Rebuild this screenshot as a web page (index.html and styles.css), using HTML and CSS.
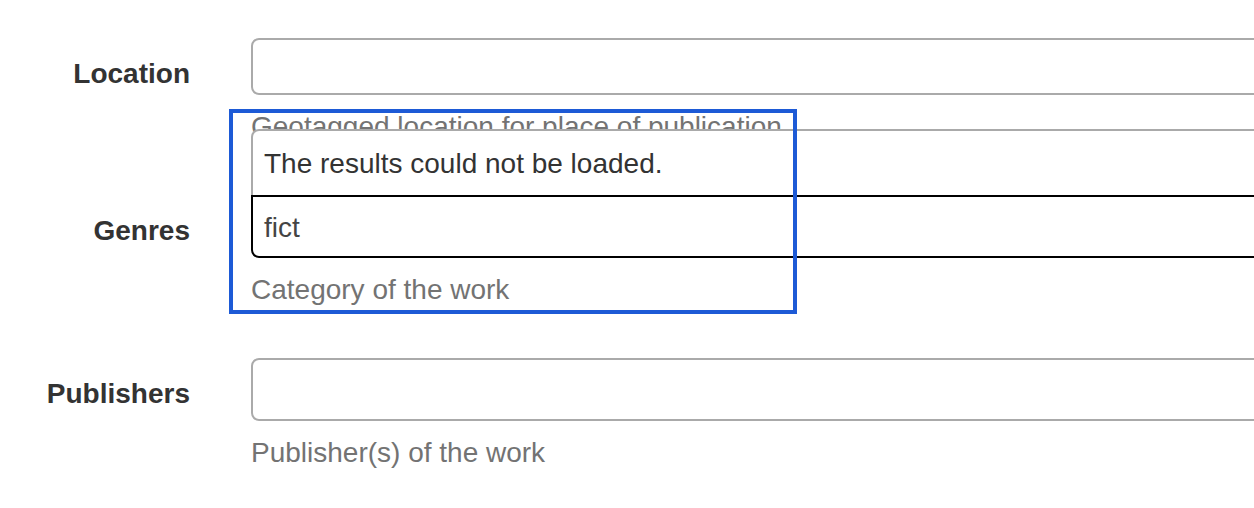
FILE: index.html
```html
<!DOCTYPE html>
<html lang="en">
<head>
<meta charset="utf-8">
<title>Work form</title>
<link rel="stylesheet" href="styles.css">
</head>
<body>
<form class="form">
  <div class="group">
    <label class="label">Location</label>
    <div class="field">
      <div class="select select--short"></div>
      <p class="help">Geotagged location for place of publication</p>
    </div>
  </div>
  <div class="group">
    <label class="label">Genres</label>
    <div class="field">
      <div class="select-wrap">
        <div class="dropdown">
          <div class="message">The results could not be loaded.</div>
        </div>
        <div class="select select--focus"><span class="search">fict</span></div>
      </div>
      <p class="help">Category of the work</p>
    </div>
  </div>
  <div class="group">
    <label class="label">Publishers</label>
    <div class="field">
      <div class="select"></div>
      <p class="help">Publisher(s) of the work</p>
    </div>
  </div>
</form>
<div class="highlight"></div>
</body>
</html>
```

FILE: styles.css
```css
html, body {
  margin: 0;
  padding: 0;
  background: #fff;
  overflow: hidden;
}

body {
  width: 1254px;
  height: 508px;
  position: relative;
  font-family: "Liberation Sans", Arial, Helvetica, sans-serif;
  font-size: 28px;
  line-height: 40px;
  color: #333;
}

.form {
  padding-top: 38px;
}

.group {
  display: flex;
  align-items: flex-start;
  margin-bottom: 30px;
}

.label {
  flex: 0 0 190px;
  text-align: right;
  font-weight: bold;
  padding-top: 16px;
  line-height: 40px;
  color: #333;
}

.field {
  flex: 0 0 1100px;
  margin-left: 61px;
}

.select-wrap {
  position: relative;
}

.select {
  box-sizing: border-box;
  height: 63px;
  border: 2px solid #aaa;
  border-radius: 8px;
  background: #fff;
}

.select--short {
  height: 57px;
}

.select--focus {
  border-color: #000;
  border-radius: 0 0 8px 8px;
  display: flex;
  align-items: center;
  padding-left: 11px;
  padding-top: 2px;
}

.search {
  color: #444;
}

.dropdown {
  position: absolute;
  left: 0;
  right: 0;
  bottom: 100%;
  box-sizing: border-box;
  border: 2px solid #aaa;
  border-bottom: none;
  border-radius: 8px 8px 0 0;
  background: #fff;
  z-index: 2;
}

.message {
  padding: 13px 11px 11px;
  line-height: 40px;
  color: #333;
}

.help {
  margin: 12px 0 18px;
  color: #737373;
  line-height: 40px;
}

.highlight {
  position: absolute;
  left: 229px;
  top: 109px;
  width: 568px;
  height: 205px;
  box-sizing: border-box;
  border: 4px solid #1d5ad6;
  z-index: 3;
  pointer-events: none;
}
```
